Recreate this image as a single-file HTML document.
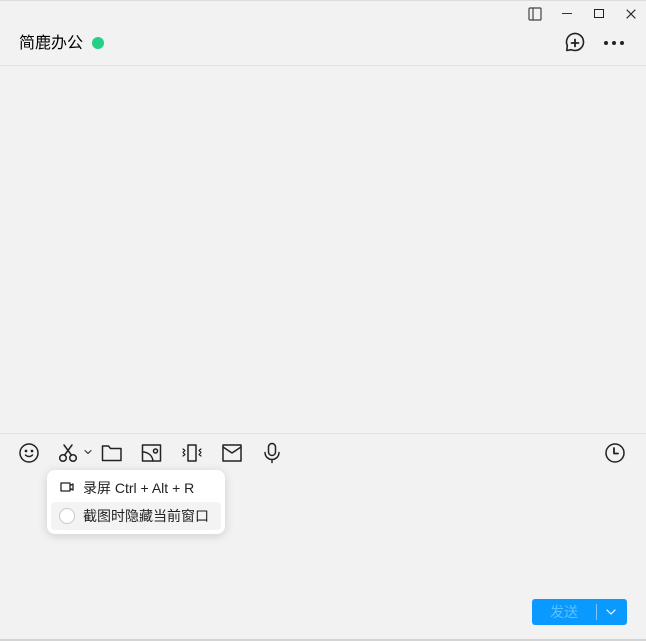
<!DOCTYPE html>
<html><head><meta charset="utf-8"><style>
*{margin:0;padding:0;box-sizing:border-box}
body{width:646px;height:641px;background:#f2f2f2;position:relative;overflow:hidden;font-family:"Liberation Sans","Noto Sans CJK SC",sans-serif;color:#111}
.a{position:absolute}
svg{position:absolute;fill:none;stroke:#222;stroke-width:1.5;stroke-linecap:round;stroke-linejoin:round}
</style></head><body>
<div class="a" style="left:0;top:0;width:646px;height:1px;background:#dcdcdc"></div>
<div class="a" style="left:0;top:65px;width:646px;height:1px;background:#e4e4e4"></div>
<div class="a" style="left:0;top:433px;width:646px;height:1px;background:#e4e4e4"></div>
<div class="a" style="left:0;top:639px;width:646px;height:2px;background:#d4d4d4"></div>
<svg style="left:528px;top:7px" width="14" height="14" viewBox="0 0 14 14"><rect x="1" y="1" width="12" height="12" rx="1" stroke="#444" stroke-width="1.2"/><line x1="5" y1="1" x2="5" y2="13" stroke="#444" stroke-width="1.2"/></svg>
<div class="a" style="left:562px;top:13px;width:10px;height:1px;background:#333"></div>
<div class="a" style="left:594px;top:9px;width:10px;height:9px;border:1.2px solid #222"></div>
<svg style="left:626px;top:9px" width="10" height="10" viewBox="0 0 10 10"><path d="M1 1L9 9M9 1L1 9" stroke-width="1.2"/></svg>
<div class="a" style="left:19px;top:34px;font-size:16px;line-height:20px;color:#000">简鹿办公</div>
<div class="a" style="left:92px;top:37px;width:12px;height:12px;border-radius:6px;background:#22d184"></div>
<svg style="left:563px;top:32px" width="24" height="24" viewBox="0 0 24 24"><path d="M12 20.5A8.5 8.5 0 1 0 4.3 15.6L3.8 20.5L8.3 19.7A8.5 8.5 0 0 0 12 20.5Z" transform="translate(0,-2)" stroke-width="1.6"/><path d="M12 7.5v7M8.5 11h7" stroke-width="1.8"/></svg>
<div class="a" style="left:604px;top:41px;width:4px;height:4px;border-radius:2px;background:#222;box-shadow:8px 0 #222,16px 0 #222"></div>
<svg style="left:18px;top:442px" width="22" height="22" viewBox="0 0 22 22"><circle cx="11" cy="11" r="9"/><circle cx="8" cy="9" r=".6" fill="#222"/><circle cx="14" cy="9" r=".6" fill="#222"/><path d="M7.5 13c2 2 5 2 7 0"/></svg>
<svg style="left:57px;top:442px" width="24" height="22" viewBox="0 0 24 22"><circle cx="6" cy="16" r="3.3"/><circle cx="16" cy="16" r="3.3"/><path d="M7.5 13.2L15 3M14.5 13.2L7 3"/></svg>
<svg style="left:84px;top:449px" width="8" height="6" viewBox="0 0 8 6"><path d="M1 1.5l3 3 3-3" stroke-width="1"/></svg>
<svg style="left:100px;top:442px" width="24" height="22" viewBox="0 0 24 22"><path d="M2.5 4h6l2 2.5h10.5v12h-18.5z"/></svg>
<svg style="left:140px;top:442px" width="24" height="22" viewBox="0 0 24 22"><rect x="2.5" y="3" width="18" height="16"/><path d="M2.5 10c6 0 10 4 10.5 9"/><circle cx="15.5" cy="9" r="2"/></svg>
<svg style="left:180px;top:442px" width="24" height="22" viewBox="0 0 24 22"><rect x="8" y="3" width="8" height="16"/><path d="M3 7l2 1.5-2 2 2 2-2 1.5M21 7l-2 1.5 2 2-2 2 2 1.5" stroke-width="1.2"/></svg>
<svg style="left:220px;top:442px" width="24" height="22" viewBox="0 0 24 22"><rect x="3" y="3" width="18" height="16"/><path d="M3 5l9 6 9-6"/></svg>
<svg style="left:260px;top:441px" width="24" height="24" viewBox="0 0 24 24"><rect x="8.5" y="2.5" width="7" height="12" rx="3.5"/><path d="M5 11.5a7 7 0 0 0 14 0M12 18.5v3"/></svg>
<svg style="left:603px;top:441px" width="24" height="24" viewBox="0 0 24 24"><circle cx="12" cy="12" r="9"/><path d="M11 7v5.5h4" stroke-width="1.8"/></svg>
<div class="a" style="left:47px;top:470px;width:178px;height:64px;background:#fff;border-radius:8px;box-shadow:0 2px 10px rgba(0,0,0,.15)"></div>
<div class="a" style="left:51px;top:502px;width:170px;height:28px;background:#f3f3f3;border-radius:4px"></div>
<svg style="left:59px;top:480px" width="16" height="14" viewBox="0 0 16 14"><path d="M2 3h9v8h-9zM11 5.5l3-1.5v6l-3-1.5" stroke-width="1.3"/></svg>
<div class="a" style="left:83px;top:479px;font-size:14px;line-height:18px;color:#222">录屏 Ctrl + Alt + R</div>
<div class="a" style="left:59px;top:508px;width:16px;height:16px;border-radius:8px;border:1px solid #c8c8c8;background:#fff"></div>
<div class="a" style="left:83px;top:507px;font-size:14px;line-height:18px;color:#222">截图时隐藏当前窗口</div>
<div class="a" style="left:532px;top:599px;width:95px;height:26px;background:#0a9aff;border-radius:3px"></div>
<div class="a" style="left:550px;top:603px;font-size:14px;line-height:18px;color:#5cc0ff">发送</div>
<div class="a" style="left:596px;top:604px;width:1px;height:16px;background:#7cc8ff"></div>
<svg style="left:606px;top:609px" width="10" height="6" viewBox="0 0 10 6"><path d="M1 1l4 4 4-4" stroke="#fff" stroke-width="1.2"/></svg>
</body></html>
